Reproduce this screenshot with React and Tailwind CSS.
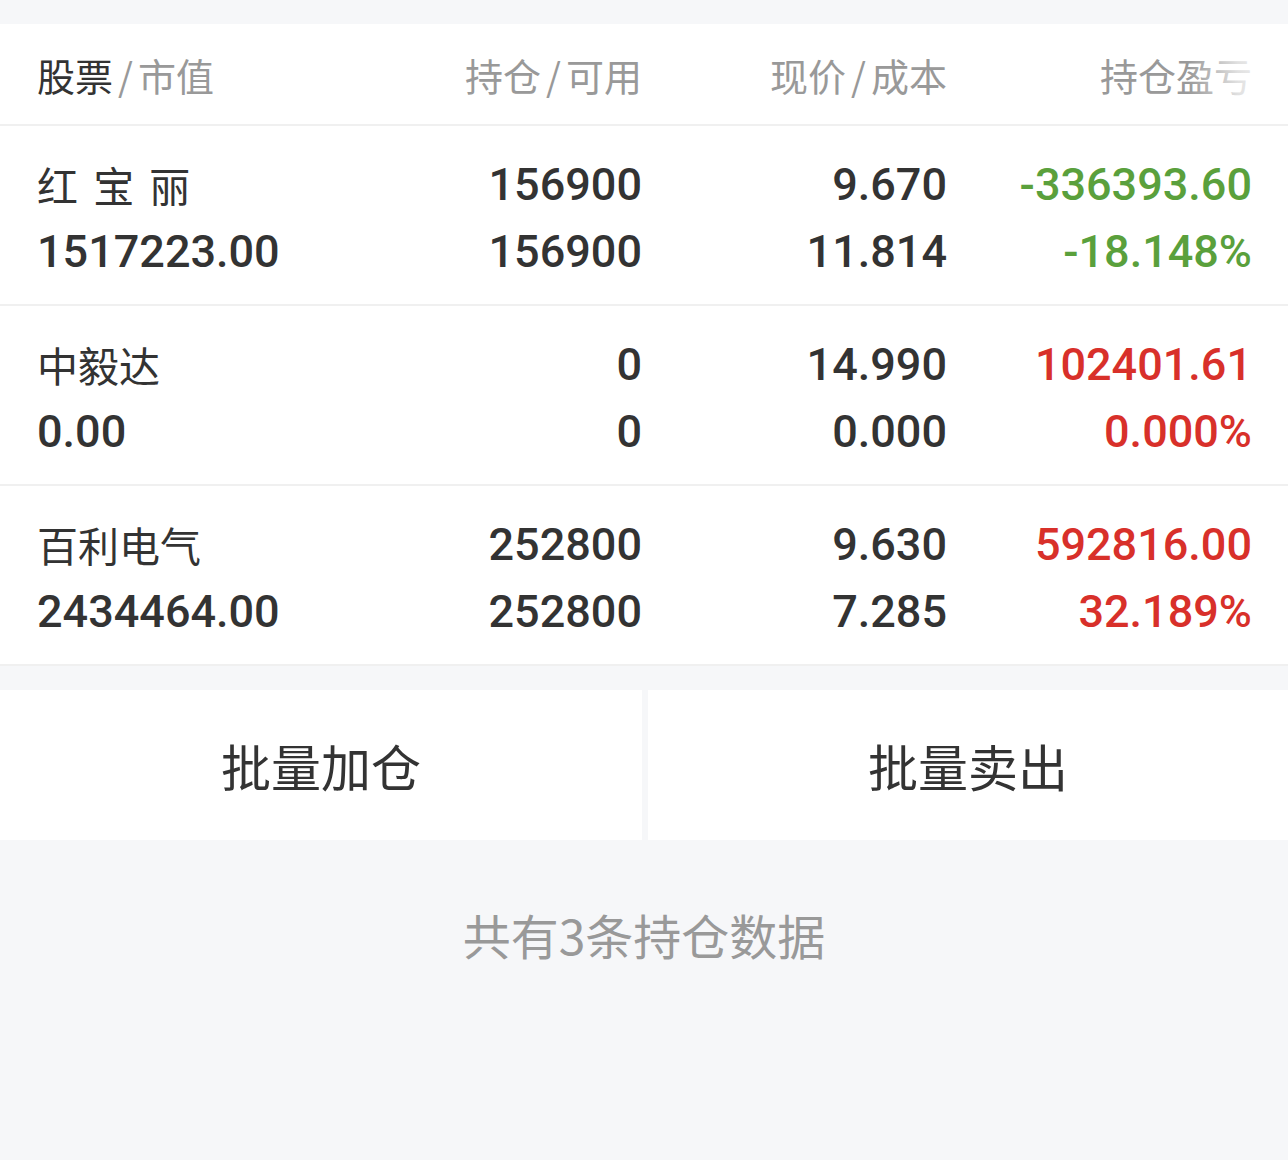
import React from 'react';

const rows = [
  { name: '红 宝 丽', value: '1517223.00', hold: '156900', avail: '156900', price: '9.670', cost: '11.814', pl: '-336393.60', pct: '-18.148%', up: false },
  { name: '中毅达', value: '0.00', hold: '0', avail: '0', price: '14.990', cost: '0.000', pl: '102401.61', pct: '0.000%', up: true },
  { name: '百利电气', value: '2434464.00', hold: '252800', avail: '252800', price: '9.630', cost: '7.285', pl: '592816.00', pct: '32.189%', up: true },
];

const cjk = "font-['Noto_Sans_CJK_SC',sans-serif]";
const num = "font-['Roboto','Noto_Sans_CJK_SC',sans-serif] font-medium";

function Slash() {
  return <span className="mx-[5px]">/</span>;
}

export default function App() {
  return (
    <div className="w-[1288px] min-h-[1160px] bg-[#f6f7f9] pt-[24px]">
      {/* header */}
      <div className={`relative bg-white h-[102px] border-b-2 border-[#f0f0f0] px-[37px] grid grid-cols-[300px_305px_305px_305px] items-center text-[38px] text-[#999] ${cjk}`}>
        <div><span className="text-[#333]">股票</span><Slash />市值</div>
        <div className="text-right">持仓<Slash />可用</div>
        <div className="text-right">现价<Slash />成本</div>
        <div className="text-right">持仓盈亏</div>
        <div className="absolute right-0 top-0 h-full w-[100px] bg-linear-to-r from-white/0 via-white/70 to-white" />
      </div>

      {/* rows */}
      {rows.map((r, i) => (
        <div key={i} className="bg-white border-b-2 border-[#f0f0f0] px-[37px] pt-[25px] pb-[19px] grid grid-cols-[300px_305px_305px_305px] text-[#333] leading-[67px]">
          <div>
            <div className={`text-[41px] [word-spacing:6px] ${cjk}`}>{r.name}</div>
            <div className={`text-[45px] ${num}`}>{r.value}</div>
          </div>
          <div className={`text-right text-[45px] ${num}`}>
            <div>{r.hold}</div>
            <div>{r.avail}</div>
          </div>
          <div className={`text-right text-[45px] ${num}`}>
            <div>{r.price}</div>
            <div>{r.cost}</div>
          </div>
          <div className={`text-right text-[45px] ${num} ${r.up ? 'text-[#d8302a]' : 'text-[#5aa03c]'}`}>
            <div>{r.pl}</div>
            <div>{r.pct}</div>
          </div>
        </div>
      ))}

      {/* buttons */}
      <div className={`mt-[24px] grid grid-cols-[642px_640px] gap-[6px] text-[50px] text-[#333] ${cjk}`}>
        <div className="bg-white h-[150px] flex items-center justify-center">批量加仓</div>
        <div className="bg-white h-[150px] flex items-center justify-center">批量卖出</div>
      </div>

      <div className={`text-center text-[48px] text-[#999] pt-[61px] leading-[66px] ${cjk}`}>共有3条持仓数据</div>
    </div>
  );
}
